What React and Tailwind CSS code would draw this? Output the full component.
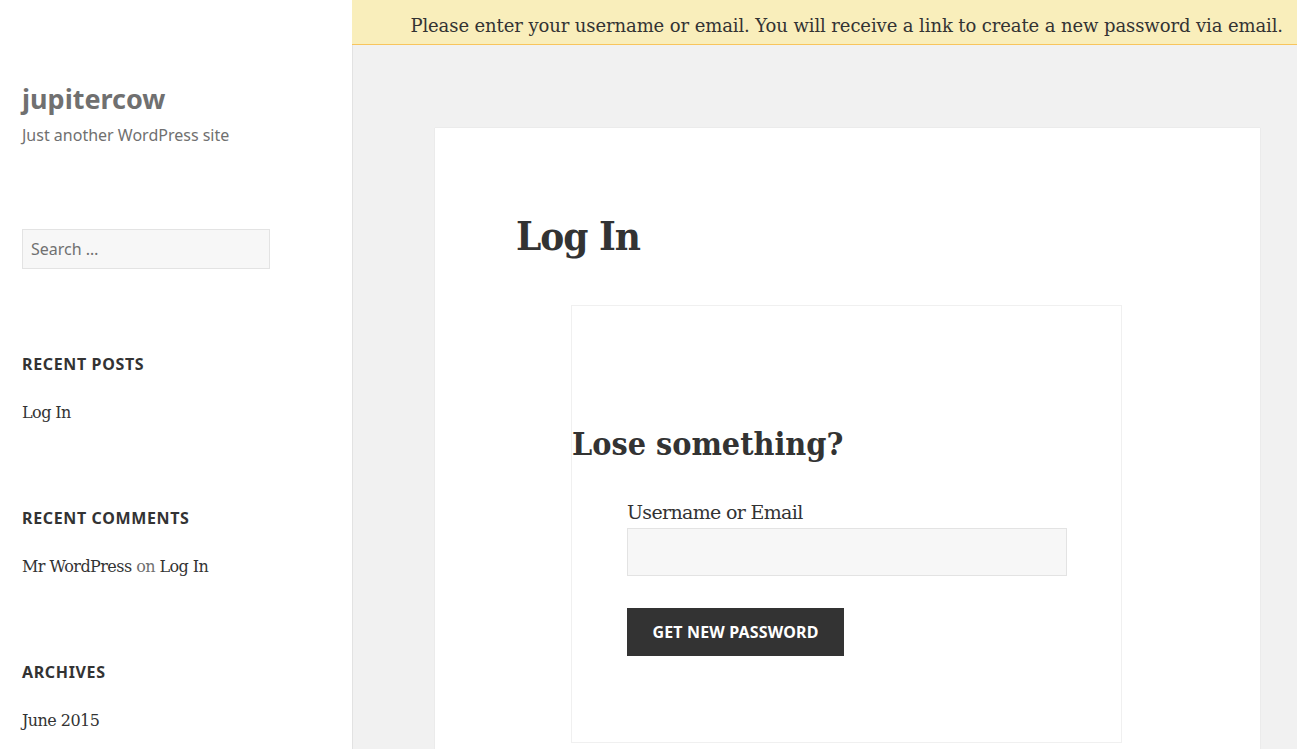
import React from "react";

const serif = "font-['DejaVu_Serif',serif]";
const serifBold = "font-['DejaVu_Serif_Condensed','DejaVu_Serif',serif]";
const sans = "font-['Noto_Sans',sans-serif]";

const Widget = ({ title, children, className = "" }) => (
  <section className={className}>
    <h2 className={`${sans} text-[16px] leading-[22px] font-bold uppercase tracking-[0.04em] text-[#333]`}>
      {title}
    </h2>
    <div className={`${serif} text-[16px] leading-[24px] tracking-[-0.035em] text-[#333] mt-[26px]`}>{children}</div>
  </section>
);

const Sidebar = () => (
  <aside className="w-[352px] shrink-0 bg-white px-[22px] pt-[83px]">
    <h1 className={`${sans} text-[27px] leading-[32px] font-bold text-[#707070]`}>jupitercow</h1>
    <p className={`${sans} text-[16px] leading-[22px] text-[#707070] mt-[9px]`}>Just another WordPress site</p>

    <input
      type="search"
      placeholder="Search …"
      className={`${sans} mt-[83px] block w-[248px] h-[40px] bg-[#f7f7f7] border border-[#e3e3e3] px-[8px] text-[16px] text-[#707070] placeholder:text-[#707070] outline-none`}
    />

    <Widget title="Recent Posts" className="mt-[84px]">
      <a>Log In</a>
    </Widget>

    <Widget title="Recent Comments" className="mt-[82px]">
      <a>Mr WordPress</a> <span className="text-[#707070]">on</span> <a>Log In</a>
    </Widget>

    <Widget title="Archives" className="mt-[82px]">
      <a>June 2015</a>
    </Widget>
  </aside>
);

export default function App() {
  return (
    <div className="flex w-[1297px] h-[749px] overflow-hidden bg-[#f1f1f1]">
      <Sidebar />

      <main className="flex-1 flex flex-col shadow-[inset_1px_0_0_#e2e2e2]">
        {/* notice bar */}
        <div className={`${serif} h-[45px] flex items-center justify-end pt-[7px] pr-[14px] bg-[#f9eebb] border-b border-[#f8c55d] text-[18px] tracking-[-0.1px] text-[#333]`}>
          Please enter your username or email. You will receive a link to create a new password via email.
        </div>

        {/* article card */}
        <article className="ml-[83px] mr-[37px] mt-[83px] flex-1 bg-white shadow-[0_0_1px_rgba(0,0,0,0.15)] pl-[81px] pt-[84px]">
          <h1 className={`${serifBold} text-[40px] leading-[48px] font-bold tracking-[-1px] text-[#333]`}>Log In</h1>

          <div className="ml-[55px] mt-[45px] w-[551px] h-[438px] border border-[#f0f0f0] pt-[118px]">
            <h2 className={`${serifBold} text-[32px] leading-[40px] font-bold text-[#333]`}>Lose something?</h2>

            <form className="px-[55px] mt-[36px]">
              <label className={`${serif} block text-[19px] leading-[24px] tracking-[-0.035em] text-[#333]`}>Username or Email</label>
              <input
                type="text"
                className="mt-[4px] block w-[440px] h-[48px] bg-[#f7f7f7] border border-[#e3e3e3] outline-none"
              />
              <button
                type="button"
                className={`${sans} mt-[32px] h-[48px] w-[217px] bg-[#333] text-white text-[16px] font-bold uppercase tracking-[0.01em]`}
              >
                Get New Password
              </button>
            </form>
          </div>
        </article>
      </main>
    </div>
  );
}
